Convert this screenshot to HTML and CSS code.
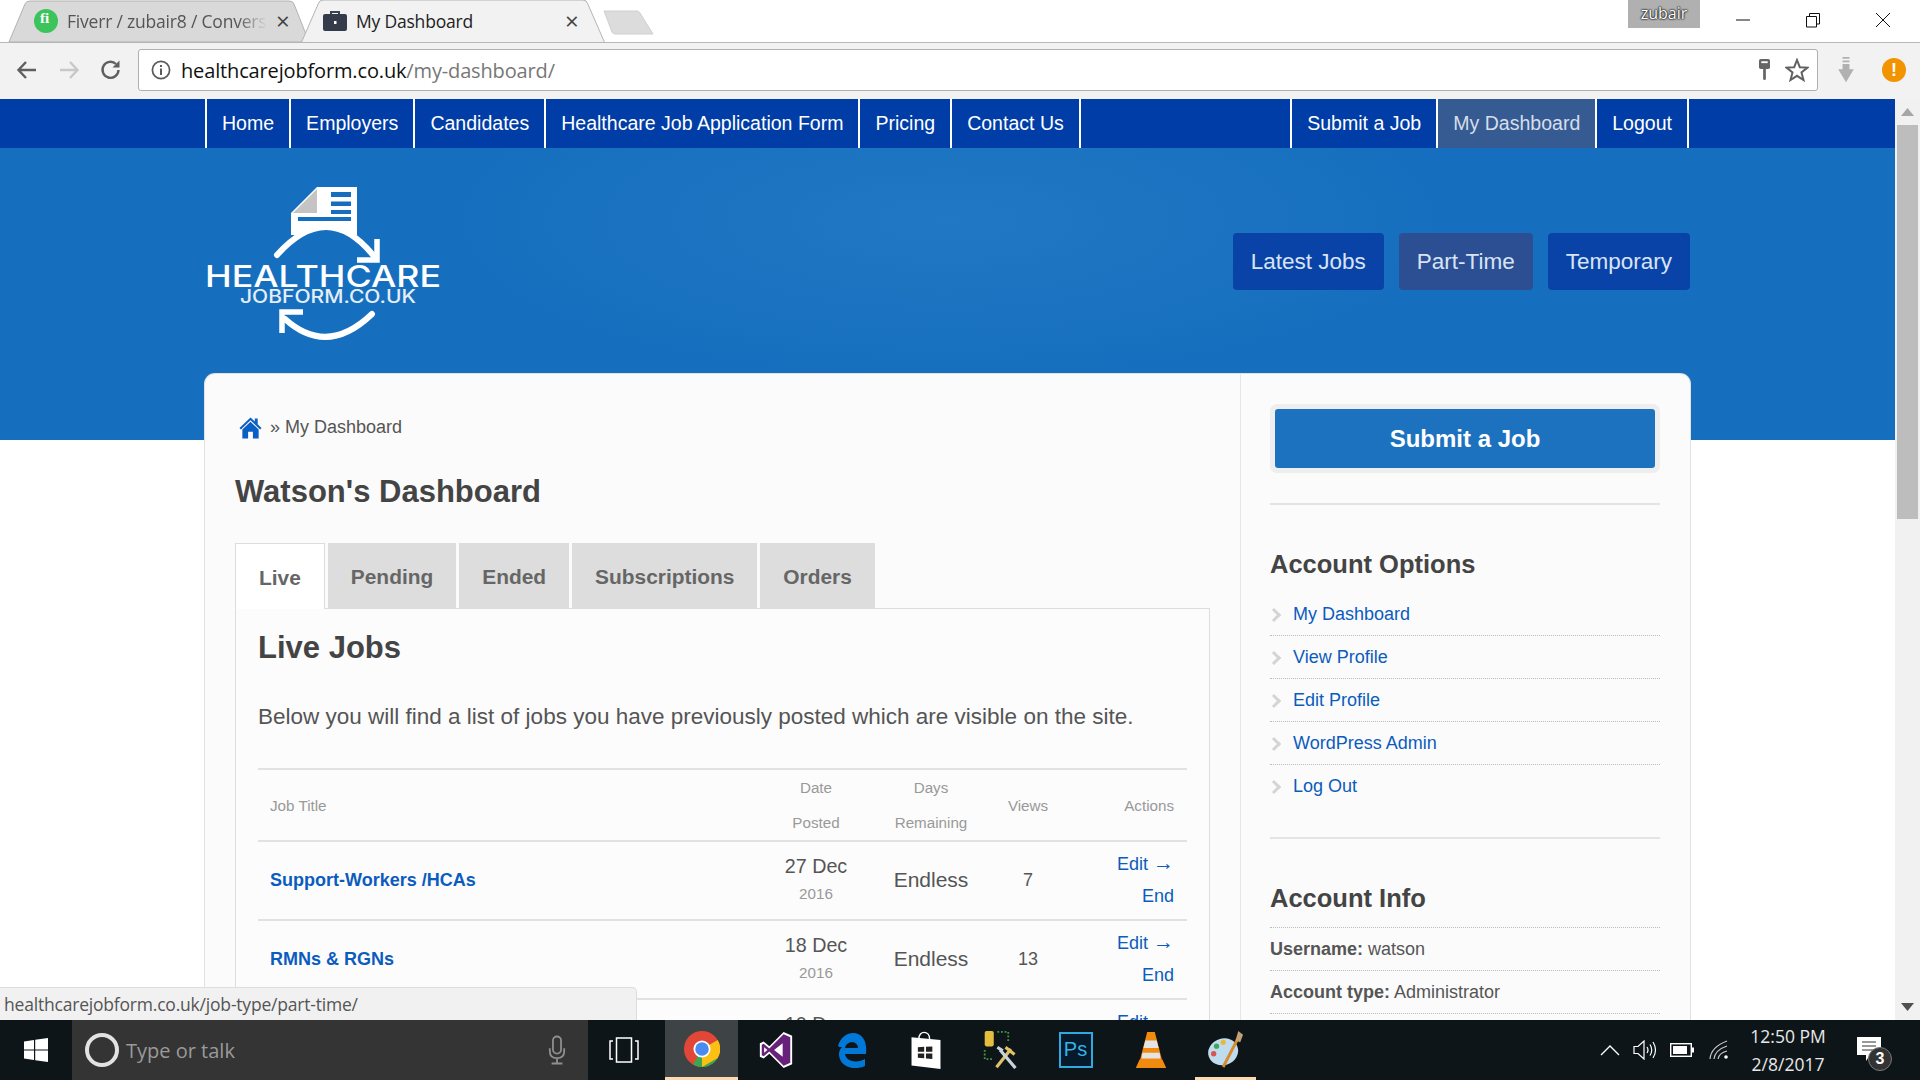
FILE: index.html
```html
<!DOCTYPE html>
<html>
    <head>
        <title>My Dashboard</title>
        <link rel="stylesheet" href="styles.css">
    </head>
    <body>
        <!-- browser frame -->
        <div class="tabstrip">
            <div class="tab tab-back">
                <svg class="tab-shape" viewBox="0 0 300 42"><path d="M0 42 L16 4 Q17 1 21 1 H280 Q284 1 285 4 L300 42 Z" fill="#d9d9d9" stroke="#b2b2b2"/></svg>
                <svg class="favicon" viewBox="0 0 24 24"><circle cx="12" cy="12" r="12" fill="#3cc35c"/></svg>
                <span class="fi">fi</span>
                <span class="tab-title tab-fade">Fiverr / zubair8 / Convers</span>
                <span class="tab-close">×</span>
            </div>
            <div class="tab tab-front">
                <svg class="tab-shape" viewBox="0 0 310 43"><path d="M0 43 L17 4 Q18 0 22 0 H288 Q292 0 293 4 L310 43" fill="#f2f2f2" stroke="#b2b2b2"/></svg>
                <svg class="favicon" viewBox="0 0 24 20"><path d="M8 3 V1 H16 V3" fill="none" stroke="#3b4250" stroke-width="2"/><rect y="3" width="24" height="17" rx="2" fill="#343c4b"/><rect x="11" y="10" width="2.5" height="3" fill="#fff"/></svg>
                <span class="tab-title">My Dashboard</span>
                <span class="tab-close">×</span>
            </div>
            <svg class="newtab" viewBox="0 0 52 26"><path d="M1 1 H34 Q36 1 37 3 L50 24 H12 Q10 24 9 22 Z" fill="#dcdcdc" stroke="#d0d0d0"/></svg>
            <div class="strip-right">
                <span class="profile">zubair</span>
                <div class="winctl">
                    <svg viewBox="0 0 16 16"><path d="M1 8 H15" stroke="#111" fill="none"/></svg>
                    <svg viewBox="0 0 16 16"><path d="M1.5 4.5 H11.5 V15 H1.5 Z M4.5 4.5 V1.5 H14.5 V12 H11.5" stroke="#111" fill="none"/></svg>
                    <svg viewBox="0 0 16 16"><path d="M1 1 L15 15 M15 1 L1 15" stroke="#111" fill="none"/></svg>
                </div>
            </div>
        </div>
        <div class="toolbar">
            <svg class="tool-icon" viewBox="0 0 24 24"><path d="M21 12 H4 M11 4 L3.5 12 L11 20" fill="none" stroke="#5f5f5f" stroke-width="2.4"/></svg>
            <svg class="tool-icon" viewBox="0 0 24 24"><path d="M3 12 H20 M13 4 L20.5 12 L13 20" fill="none" stroke="#c8c8c8" stroke-width="2.4"/></svg>
            <svg class="tool-icon" viewBox="0 0 24 24"><path d="M19.5 12 A8 8 0 1 1 17 6" fill="none" stroke="#5f5f5f" stroke-width="2.4"/><path d="M20.5 2.5 V9.5 H13.5 Z" fill="#5f5f5f"/></svg>
            <div class="omnibox">
                <svg class="info" viewBox="0 0 20 20"><circle cx="10" cy="10" r="8.6" fill="none" stroke="#5a5a5a" stroke-width="1.7"/><rect x="9" y="8.5" width="2" height="6.5" fill="#5a5a5a"/><rect x="9" y="5" width="2" height="2" fill="#5a5a5a"/></svg>
                <span class="url">healthcarejobform.co.uk<span class="url-path">/my-dashboard/</span></span>
                <svg class="key" viewBox="0 0 14 24"><rect x="1" y="0" width="12" height="11" rx="2" fill="#666"/><rect x="3.5" y="2.5" width="7" height="2" fill="#fff"/><rect x="5.5" y="10" width="3" height="13" rx="1.5" fill="#666"/></svg>
                <svg class="star" viewBox="0 0 24 24"><path d="M12 2 L14.8 9.2 L22.5 9.6 L16.5 14.4 L18.5 22 L12 17.8 L5.5 22 L7.5 14.4 L1.5 9.6 L9.2 9.2 Z" fill="none" stroke="#616161" stroke-width="2"/></svg>
            </div>
            <svg class="dl" viewBox="0 0 20 30"><path d="M6 0 H14 V2 H6 Z M6 4 H14 V6 H6 Z M6 8 H14 V14 H19 L10 29 L1 14 H6 Z" fill="#b1b1b1"/></svg>
            <div class="alert">!</div>
        </div>

        <div class="viewport">
            <div class="page">
                <div class="topnav">
                    <div class="wrap nav-inner">
                        <ul class="nav-group">
                            <li><a href="#">Home</a></li>
                            <li><a href="#">Employers</a></li>
                            <li><a href="#">Candidates</a></li>
                            <li><a href="#">Healthcare Job Application Form</a></li>
                            <li><a href="#">Pricing</a></li>
                            <li><a href="#">Contact Us</a></li>
                        </ul>
                        <ul class="nav-group nav-right">
                            <li><a href="#">Submit a Job</a></li>
                            <li class="current"><a href="#">My Dashboard</a></li>
                            <li><a href="#">Logout</a></li>
                        </ul>
                    </div>
                </div>
                <div class="hero">
                    <div class="wrap hero-inner">
                        <svg class="logo" viewBox="0 0 240 156">
                            <path d="M112 0 H152 V48 H86 V26 Z" fill="#fff"/>
                            <path d="M112 2 L88 26 H112 Z" fill="#c4c4c4"/>
                            <path d="M126 5 H146 V10 H126 Z M126 14.5 H146 V19 H126 Z M126 23 H146 V27 H126 Z M93 30 H146 V34 H93 Z" fill="#166fbe"/>
                            <path d="M66 72 Q122 8 178 72 V90 H66 Z" fill="#166fbe"/>
                            <path d="M72 68 Q122 12 168 68" fill="none" stroke="#fff" stroke-width="6" stroke-linecap="round"/>
                            <path d="M172 52 V73 H152" fill="none" stroke="#fff" stroke-width="5.5"/>
                            <text class="logo-big" x="0" y="100" textLength="236" lengthAdjust="spacingAndGlyphs">HEALTHCARE</text>
                            <text class="logo-small" x="35" y="116" textLength="176" lengthAdjust="spacingAndGlyphs">JOBFORM.CO.UK</text>
                            <path d="M167 127 Q122 170 80 132" fill="none" stroke="#fff" stroke-width="6" stroke-linecap="round"/>
                            <path d="M77 146 V125 H98" fill="none" stroke="#fff" stroke-width="5.5"/>
                        </svg>
                        <div class="hero-links">
                            <a href="#">Latest Jobs</a>
                            <a href="#" class="hover">Part-Time</a>
                            <a href="#">Temporary</a>
                        </div>
                    </div>
                </div>

                <div class="wrap card">
                    <div class="main-col">
                        <div class="crumbs">
                            <svg class="home" viewBox="0 0 24 24"><path d="M0.5 12.5 L12 1.5 L16.5 5.8 V2.5 H19.5 V8.6 L23.5 12.5 L22 14 L12 4.5 L2 14 Z" fill="#0a5fc4"/><path d="M3.5 14 L12 6 L20.5 14 V23.5 H14.5 V16.5 H9.5 V23.5 H3.5 Z" fill="#0a5fc4"/></svg>
                            <span>» My Dashboard</span>
                        </div>
                        <h1>Watson's Dashboard</h1>
                        <ul class="tabs">
                            <li class="active">Live</li>
                            <li>Pending</li>
                            <li>Ended</li>
                            <li>Subscriptions</li>
                            <li>Orders</li>
                        </ul>
                        <div class="panel">
                            <h2>Live Jobs</h2>
                            <p class="lead">Below you will find a list of jobs you have previously posted which are visible on the site.</p>
                            <table class="jobs">
                                <thead>
                                    <tr>
                                        <th class="c-title">Job Title</th>
                                        <th class="c-date">Date<br>Posted</th>
                                        <th class="c-days">Days<br>Remaining</th>
                                        <th class="c-views">Views</th>
                                        <th class="c-actions">Actions</th>
                                    </tr>
                                </thead>
                                <tbody>
                                    <tr>
                                        <td class="c-title"><a href="#">Support-Workers /HCAs</a></td>
                                        <td class="c-date">27 Dec<small>2016</small></td>
                                        <td class="c-days">Endless</td>
                                        <td class="c-views">7</td>
                                        <td class="c-actions"><a href="#">Edit <span class="arrow">→</span></a><a href="#">End</a></td>
                                    </tr>
                                    <tr>
                                        <td class="c-title"><a href="#">RMNs &amp; RGNs</a></td>
                                        <td class="c-date">18 Dec<small>2016</small></td>
                                        <td class="c-days">Endless</td>
                                        <td class="c-views">13</td>
                                        <td class="c-actions"><a href="#">Edit <span class="arrow">→</span></a><a href="#">End</a></td>
                                    </tr>
                                    <tr>
                                        <td class="c-title"></td>
                                        <td class="c-date">10 Dec<small>2016</small></td>
                                        <td class="c-days">Endless</td>
                                        <td class="c-views"></td>
                                        <td class="c-actions"><a href="#">Edit <span class="arrow">→</span></a><a href="#">End</a></td>
                                    </tr>
                                </tbody>
                            </table>
                        </div>
                    </div>
                    <div class="side-col">
                        <a href="#" class="submit-btn"><span>Submit a Job</span></a>
                        <div class="rule"></div>
                        <h3>Account Options</h3>
                        <ul class="side-links">
                            <li><a href="#">My Dashboard</a></li>
                            <li><a href="#">View Profile</a></li>
                            <li><a href="#">Edit Profile</a></li>
                            <li><a href="#">WordPress Admin</a></li>
                            <li><a href="#">Log Out</a></li>
                        </ul>
                        <div class="rule"></div>
                        <h3>Account Info</h3>
                        <ul class="side-info">
                            <li><b>Username:</b> watson</li>
                            <li><b>Account type:</b> Administrator</li>
                        </ul>
                    </div>
                </div>
            </div>
            <div class="scrollbar">
                <svg viewBox="0 0 25 26"><path d="M6 17 L12.5 9 L19 17 Z" fill="#a6a6a6"/></svg>
                <div class="thumb"></div>
                <svg class="sb-down" viewBox="0 0 25 26"><path d="M6 9 L12.5 17 L19 9 Z" fill="#505050"/></svg>
            </div>
            <div class="status">healthcarejobform.co.uk/job-type/part-time/</div>
        </div>

        <!-- windows taskbar -->
        <div class="taskbar">
            <div class="start">
                <svg viewBox="0 0 24 24"><path d="M0 3.4 L10 2 V11.4 H0 Z M11.2 1.8 L24 0 V11.4 H11.2 Z M0 12.6 H10 V22 L0 20.6 Z M11.2 12.6 H24 V24 L11.2 22.2 Z" fill="#fff"/></svg>
            </div>
            <div class="search">
                <span class="cortana"></span>
                <span class="search-text">Type or talk</span>
                <svg class="mic" viewBox="0 0 20 32"><rect x="5.5" y="1" width="9" height="19" rx="4.5" fill="none" stroke="#8f8f8f" stroke-width="2"/><path d="M2 14 V17 Q2 25 10 25 Q18 25 18 17 V14 M10 25 V30 M4 31 H16" fill="none" stroke="#8f8f8f" stroke-width="2"/></svg>
            </div>
            <div class="taskview">
                <svg viewBox="0 0 30 26"><rect x="7.5" y="1" width="15" height="24" fill="none" stroke="#fff" stroke-width="1.5"/><path d="M4 4 H1 V22 H4 M26 4 H29 V22 H26" fill="none" stroke="#fff" stroke-width="1.5"/></svg>
            </div>
            <div class="app app-active">
                <svg viewBox="0 0 32 32"><circle cx="16" cy="16" r="16" fill="#e24637"/><path d="M16 16 L30 24 A16 16 0 0 1 8 29.8 Z" fill="#3aa853"/><path d="M16 16 L30 8 A16 16 0 0 1 30 24 L16 32 Z" fill="#fbc012"/><circle cx="16" cy="16" r="7.6" fill="#fff"/><circle cx="16" cy="16" r="6" fill="#4a8bf0"/></svg>
            </div>
            <div class="app">
                <svg viewBox="0 0 36 40"><path d="M26 1 L35 5 V35 L26 39 L11 24 L5 29 L1 27 V13 L5 11 L11 16 Z" fill="#fff"/><path d="M26 3.5 L33 6.5 V33.5 L26 36.5 L11 21.5 L5 26.5 L3 25.5 V14.5 L5 13.5 L11 18.5 Z" fill="#68217a"/><path d="M25 13 V27 L16 20 Z M5.5 17 L9 20 L5.5 23 Z" fill="#fff"/></svg>
            </div>
            <div class="app">
                <svg viewBox="0 0 34 38"><path d="M4 15 C7 4 17 0 24 3 C31 6 33 14 32 23 H11 C12 30 22 33 31 28 V35 C20 40 6 36 5 24 C4.800 21 6 18 8 16 C6 16 5 16 4 15 Z M11 17 H24 C24 10 13 9 11 17 Z" fill="#0078d7"/></svg>
            </div>
            <div class="app">
                <svg viewBox="0 0 32 42"><path d="M8 9 C8 -1 20 -1 20 9" fill="none" stroke="#fff" stroke-width="1.6"/><path d="M0 7 L32 10 V42 L0 38 Z" fill="#fff"/><path d="M7 18 L14 17.500 V23 H7 Z M16 17.300 L23 17 V23 H16 Z M7 25 H14 V30 L7 29.500 Z M16 25 H23 V31 L16 30.300 Z" fill="#222"/></svg>
            </div>
            <div class="app">
                <svg viewBox="0 0 38 42"><rect x="1" y="0" width="10" height="17" rx="2" fill="#e5bd3e"/><path d="M15 1 H27 V13 M1 21 V31 H10" fill="none" stroke="#3f9a3c" stroke-width="2" stroke-dasharray="2 2"/><path d="M14 40 L30 20 M24 18 L34 26" stroke="#e0c068" stroke-width="3.5" fill="none"/><path d="M35 41 L18 21 M15 18 L21 22" stroke="#c9d3dc" stroke-width="3.5" fill="none"/></svg>
            </div>
            <div class="app">
                <div class="ps">Ps</div>
            </div>
            <div class="app">
                <svg viewBox="0 0 32 40"><path d="M12 1 H20 L28 32 H4 Z" fill="#f28a10"/><path d="M10 10 H22 L24 18 H8 Z M7 23 H25 L26 29 H6 Z" fill="#e4e4e4"/><path d="M4 30 H28 L32 39 H0 Z" fill="#f28a10"/></svg>
            </div>
            <div class="app app-open">
                <svg viewBox="0 0 38 40"><ellipse cx="16" cy="23" rx="16" ry="14" fill="#bfdcee" transform="rotate(-18 16 23)"/><circle cx="9" cy="17" r="2.800" fill="#3aa65a"/><circle cx="6" cy="25" r="2.800" fill="#d9534f"/><circle cx="16" cy="13" r="2.800" fill="#e8b83a"/><path d="M16 39 L31 10" stroke="#d98a2b" stroke-width="3" fill="none"/><path d="M29 11 L32 1 L37 5 L34 13 Z" fill="#c2a078"/></svg>
            </div>
            <div class="tray">
                <svg class="tray-chevron" viewBox="0 0 20 12"><path d="M1 11 L10 2 L19 11" fill="none" stroke="#fff" stroke-width="1.4"/></svg>
                <svg class="tray-sound" viewBox="0 0 24 20"><path d="M1 6.500 H5 L11 1 V19 L5 13.500 H1 Z" fill="none" stroke="#fff" stroke-width="1.2"/><path d="M14 7 Q16 10 14 13 M17 4.500 Q20.500 10 17 15.500 M20 2 Q25 10 20 18" fill="none" stroke="#fff" stroke-width="1.2"/></svg>
                <svg class="tray-battery" viewBox="0 0 24 14"><rect x="0.700" y="0.700" width="20.600" height="12.600" fill="none" stroke="#fff" stroke-width="1.400"/><rect x="3" y="3" width="14" height="8" fill="#fff"/><rect x="22" y="4.500" width="2" height="5" fill="#fff"/></svg>
                <svg class="tray-wifi" viewBox="0 0 20 20"><path d="M1 19 Q2 7 18 1 M5 19 Q6 10 18 6 M9 19 Q10 13 18 11" fill="none" stroke="#c8c8c8" stroke-width="1.200"/><circle cx="17" cy="17" r="1.800" fill="#fff"/></svg>
                <div class="clock"><span>12:50 PM</span><span>2/8/2017</span></div>
                <div class="notify">
                    <svg viewBox="0 0 24 26"><path d="M0 0 H24 V18 H13 L9 24 V18 H0 Z" fill="#fff"/><path d="M5 5 H19 M5 9 H19 M5 13 H19" stroke="#333" stroke-width="1"/></svg>
                    <span class="badge">3</span>
                </div>
            </div>
        </div>
    </body>
</html>
```

FILE: styles.css
```css
html, body {
    margin: 0;
    height: 100%;
}
body {
    display: flex;
    flex-direction: column;
    overflow: hidden;
    font-family: "Liberation Sans", Arial, sans-serif;
    color: #444;
}
a {
    text-decoration: none;
    color: #0b5cbe;
}
ul {
    list-style: none;
    margin: 0;
    padding: 0;
}

/* browser frame */
.tabstrip {
    height: 42px;
    flex: none;
    display: flex;
    background: #fff;
    padding-left: 9px;
    position: relative;
    font-family: "Open Sans", sans-serif;
    font-size: 17.5px;
}
.tab {
    position: relative;
    width: 300px;
    height: 42px;
    display: flex;
    align-items: center;
}
.tab-shape {
    position: absolute;
    left: 0;
    top: 0;
    width: 100%;
    height: 100%;
    overflow: visible;
}
.tab-back {
    color: #555;
}
.tab-front {
    width: 310px;
    margin-left: -11px;
    color: #222;
}
.favicon {
    position: relative;
    width: 24px;
    height: 24px;
    margin-left: 25px;
    flex: none;
}
.tab-front .favicon {
    margin-left: 25px;
    height: 20px;
}
.fi {
    position: absolute;
    left: 31px;
    top: 10px;
    color: #fff;
    font: bold 15px "Liberation Serif", serif;
}
.tab-title {
    position: relative;
    margin-left: 9px;
    width: 200px;
    white-space: nowrap;
    overflow: hidden;
    letter-spacing: -0.2px;
}
.tab-close {
    position: relative;
    margin-left: 9px;
    font-size: 24px;
    line-height: 24px;
    color: #444;
}
.newtab {
    width: 52px;
    height: 26px;
    margin: 10px 0 0 -5px;
    flex: none;
}
.tab-fade {
    -webkit-mask-image: linear-gradient(to right, #000 85%, transparent);
    mask-image: linear-gradient(to right, #000 85%, transparent);
}
.strip-right {
    margin-left: auto;
    display: flex;
    align-items: flex-start;
}
.profile {
    width: 72px;
    height: 28px;
    background: #b0b0b0;
    color: #fff;
    text-align: center;
    font-size: 16px;
    line-height: 26px;
    text-shadow: 0 0 1px #111, 0 0 2px #111, 0 0 2px #111;
}
.winctl {
    display: flex;
    gap: 54px;
    padding: 12px 29px 0 35px;
}
.winctl svg {
    width: 16px;
    height: 16px;
}
.toolbar {
    height: 57px;
    flex: none;
    box-sizing: border-box;
    background: #f2f2f2;
    border-top: 1px solid #b8b8b8;
    display: flex;
    align-items: center;
    padding: 0 0 2px 15px;
}
.tool-icon {
    width: 24px;
    height: 24px;
    margin-right: 18px;
    flex: none;
}
.omnibox {
    box-sizing: border-box;
    width: 1680px;
    height: 42px;
    margin-left: -3px;
    background: #fff;
    border: 1px solid #b0b0b0;
    border-radius: 3px;
    display: flex;
    align-items: center;
    padding-left: 12px;
}
.info {
    width: 20px;
    height: 20px;
    flex: none;
}
.url {
    margin-left: 10px;
    font-family: "Open Sans", sans-serif;
    font-size: 20px;
    color: #111;
    letter-spacing: -0.15px;
}
.url-path {
    color: #777;
}
.key {
    width: 13px;
    height: 22px;
    margin-left: auto;
}
.star {
    width: 24px;
    height: 24px;
    margin: 0 8px 0 14px;
}
.dl {
    width: 18px;
    height: 26px;
    margin-left: 19px;
}
.alert {
    width: 24px;
    height: 24px;
    margin-left: 27px;
    border-radius: 50%;
    background: #f29400;
    color: #fff;
    font-weight: bold;
    font-size: 18px;
    line-height: 24px;
    text-align: center;
}

/* page inside the browser */
.viewport {
    flex: 1;
    min-height: 0;
    display: flex;
    position: relative;
}
.page {
    flex: 1;
    min-width: 0;
    overflow: hidden;
    background: #fff;
}
.wrap {
    width: 1485px;
    margin-left: auto;
    margin-right: auto;
}
.topnav {
    height: 49px;
    background: #003da6;
}
.nav-inner {
    display: flex;
    justify-content: space-between;
}
.nav-group {
    display: flex;
    height: 49px;
}
.nav-right {
    margin-right: 1px;
}
.nav-group li {
    border-right: 2px solid #fff;
    padding: 0 15px;
    line-height: 48px;
    font-size: 19.55px;
}
.nav-group li:first-child {
    border-left: 2px solid #fff;
}
.nav-group a {
    color: #fff;
}
.nav-group .current {
    background: #355b92;
}
.nav-group .current a {
    color: #d6deea;
}
.hero {
    height: 292px;
    background: radial-gradient(ellipse 500px 160px at 50% 25%, #2178c4, #166fbe);
}
.hero-inner {
    display: flex;
    justify-content: space-between;
}
.logo {
    width: 240px;
    height: 156px;
    margin-top: 39px;
}
.logo-big {
    fill: #fff;
    font-family: "Inter", sans-serif;
    font-weight: 500;
    font-size: 30px;
}
.logo-small {
    fill: #e4eef7;
    font-family: "Inter", sans-serif;
    font-weight: 500;
    font-size: 18px;
}
.hero-links {
    display: flex;
    gap: 15px;
    margin-top: 85px;
    height: 57px;
    align-items: stretch;
}
.hero-links a {
    background: #0a43a8;
    color: #d8e4f4;
    font-size: 22.5px;
    line-height: 57px;
    padding: 0 18px;
    border-radius: 4px;
}
.hero-links .hover {
    background: #2c4f93;
}

/* white card */
.card {
    margin-top: -66px;
    background: #fbfbfb;
    border-radius: 10px 10px 0 0;
    box-shadow: 0 0 0 1px #e2e2e2;
    display: flex;
    height: 800px;
}
.main-col {
    box-sizing: border-box;
    width: 1036px;
    padding: 0 30px;
    border-right: 1px solid #e6e6e6;
}
.crumbs {
    display: flex;
    align-items: center;
    gap: 8px;
    margin-top: 41px;
    padding-left: 4px;
    height: 25px;
    font-size: 18px;
    color: #555;
}
.home {
    width: 23px;
    height: 23px;
}
h1 {
    margin: 32px 0 0;
    font-size: 31px;
    line-height: 40px;
    color: #444;
}
.tabs {
    display: flex;
    gap: 3px;
    margin-top: 31px;
    position: relative;
    z-index: 1;
}
.tabs li {
    height: 65px;
    line-height: 67px;
    padding: 0 23px;
    background: #ddd;
    color: #666;
    font-size: 20.9px;
    font-weight: bold;
}
.tabs .active {
    background: #fff;
    box-sizing: border-box;
    height: 66px;
    margin-bottom: -1px;
    border: solid #ddd;
    border-width: 1px 1px 0;
    padding: 0 23px;
}
.panel {
    border: 1px solid #ddd;
    padding: 19px 22px 0;
    background: #fcfcfc;
}
h2 {
    margin: 0;
    font-size: 31px;
    line-height: 40px;
    color: #444;
}
.lead {
    margin: 32px 0 0;
    font-size: 22.5px;
    line-height: 33px;
    color: #555;
}
.jobs {
    margin-top: 35px;
    width: 100%;
    table-layout: fixed;
    border-collapse: collapse;
}
.jobs th {
    border-top: 2px solid #e2e2e2;
    border-bottom: 2px solid #e2e2e2;
    padding: 0;
    height: 70px;
    font-size: 15.2px;
    font-weight: normal;
    line-height: 35px;
    color: #999;
}
.jobs td {
    border-bottom: 2px solid #e2e2e2;
    padding: 0 0 1px;
    height: 76px;
}
.c-title {
    width: 501px;
    text-align: left;
}
.jobs .c-title {
    padding-left: 12px;
}
td.c-title a {
    font-size: 18px;
    font-weight: bold;
}
.c-date {
    width: 90px;
    text-align: center;
}
td.c-date {
    font-size: 19.7px;
    line-height: 28px;
    color: #555;
}
td.c-date small {
    display: block;
    font-size: 15.2px;
    color: #999;
}
.c-days {
    width: 140px;
    text-align: center;
}
td.c-days {
    font-size: 21px;
    color: #555;
}
.c-views {
    width: 54px;
    text-align: center;
}
td.c-views {
    font-size: 18px;
    color: #555;
}
.c-actions {
    text-align: right;
}
.jobs .c-actions {
    padding-right: 13px;
}
td.c-actions a {
    display: block;
    font-size: 18px;
    line-height: 32px;
}
.arrow {
    font-size: 21px;
    line-height: 20px;
}

/* sidebar */
.side-col {
    flex: 1;
    padding: 30px 30px 0 29px;
}
.submit-btn {
    display: block;
    box-sizing: border-box;
    height: 69px;
    border: 5px solid #eee;
    border-radius: 7px;
}
.submit-btn span {
    display: block;
    height: 59px;
    line-height: 59px;
    border-radius: 3px;
    background: #1d72bf;
    color: #fff;
    font-size: 24px;
    font-weight: bold;
    text-align: center;
}
.rule {
    margin-top: 30px;
    border-top: 2px solid #e4e4e4;
}
h3 {
    margin: 41px 0 0;
    font-size: 25.5px;
    line-height: 36px;
    color: #444;
}
.side-links {
    margin-top: 11px;
}
.side-links li {
    height: 42px;
    line-height: 42px;
    border-bottom: 1px dotted #bbb;
    font-size: 18px;
    padding-left: 23px;
    position: relative;
}
.side-links li:last-child {
    border-bottom: 0;
}
.side-links li::before {
    content: "";
    position: absolute;
    left: -1px;
    top: 17px;
    width: 7px;
    height: 7px;
    border: solid #d4d4d4;
    border-width: 3px 3px 0 0;
    transform: rotate(45deg);
}
.side-info {
    margin-top: 11px;
    border-top: 1px dotted #bbb;
}
.side-info li {
    height: 42px;
    line-height: 42px;
    border-bottom: 1px dotted #bbb;
    font-size: 18px;
    color: #555;
}
.scrollbar {
    width: 25px;
    flex: none;
    background: #f1f1f1;
    display: flex;
    flex-direction: column;
    align-items: center;
}
.scrollbar svg {
    width: 25px;
    height: 26px;
    flex: none;
}
.thumb {
    width: 21px;
    height: 394px;
    background: #bdbdbd;
}
.sb-down {
    margin-top: auto;
}
.status {
    position: absolute;
    left: 0;
    bottom: 0;
    box-sizing: border-box;
    width: 637px;
    height: 33px;
    padding-left: 4px;
    background: #f1f1f1;
    border: 1px solid #ddd;
    border-width: 1px 1px 0 0;
    border-radius: 0 5px 0 0;
    font-family: "Open Sans", sans-serif;
    font-size: 17.5px;
    line-height: 32px;
    letter-spacing: -0.2px;
    color: #555;
}

/* taskbar */
.taskbar {
    height: 60px;
    flex: none;
    display: flex;
    align-items: center;
    background: #0e1518;
    color: #fff;
}
.start {
    width: 72px;
    display: flex;
    padding-left: 24px;
    box-sizing: border-box;
}
.start svg {
    width: 24px;
    height: 24px;
}
.search {
    box-sizing: border-box;
    width: 516px;
    height: 60px;
    background: #343434;
    display: flex;
    align-items: center;
    padding-left: 13px;
}
.cortana {
    box-sizing: border-box;
    width: 34px;
    height: 34px;
    border-radius: 50%;
    border: 4px solid #e2e2e2;
    flex: none;
}
.search-text {
    margin-left: 7px;
    font-family: "Open Sans", sans-serif;
    font-size: 20px;
    color: #9a9a9a;
}
.mic {
    width: 18px;
    height: 30px;
    margin-left: auto;
    margin-right: 22px;
}
.taskview {
    box-sizing: border-box;
    width: 77px;
    padding-right: 6px;
    display: flex;
    justify-content: center;
}
.taskview svg {
    width: 30px;
    height: 26px;
}
.app {
    width: 75px;
    height: 60px;
    flex: none;
    box-sizing: border-box;
    display: flex;
    align-items: center;
    justify-content: center;
}
.app svg {
    width: 36px;
    height: 38px;
}
.app-active {
    width: 73px;
    background: #3e4345;
    border-bottom: 3px solid #fcd9b0;
}
.app-open {
    width: 61px;
    margin: 0 7px;
    border-bottom: 3px solid #fcd9b0;
}
.ps {
    box-sizing: border-box;
    width: 34px;
    height: 36px;
    border: 2px solid #2fa9e0;
    background: #061a2c;
    color: #35b2e6;
    font-size: 20px;
    line-height: 30px;
    text-align: center;
}
.tray {
    margin-left: auto;
    display: flex;
    align-items: center;
    padding-right: 39px;
    height: 60px;
}
.tray-chevron {
    width: 20px;
    height: 12px;
}
.tray-sound {
    width: 24px;
    height: 20px;
    margin-left: 13px;
}
.tray-battery {
    width: 24px;
    height: 14px;
    margin-left: 13px;
}
.tray-wifi {
    width: 20px;
    height: 20px;
    margin-left: 15px;
}
.clock {
    display: flex;
    flex-direction: column;
    align-items: center;
    width: 76px;
    margin-left: 21px;
    font-family: "Open Sans", sans-serif;
    font-size: 17.5px;
    line-height: 28px;
    color: #e8e8e8;
}
.notify {
    position: relative;
    margin-left: 31px;
    width: 24px;
    height: 26px;
}
.notify svg {
    display: block;
    width: 24px;
    height: 26px;
}
.badge {
    position: absolute;
    left: 11px;
    top: 10px;
    box-sizing: border-box;
    width: 24px;
    height: 24px;
    border-radius: 50%;
    background: #333;
    border: 1px solid #777;
    font-size: 16px;
    font-weight: bold;
    line-height: 22px;
    text-align: center;
}
```
